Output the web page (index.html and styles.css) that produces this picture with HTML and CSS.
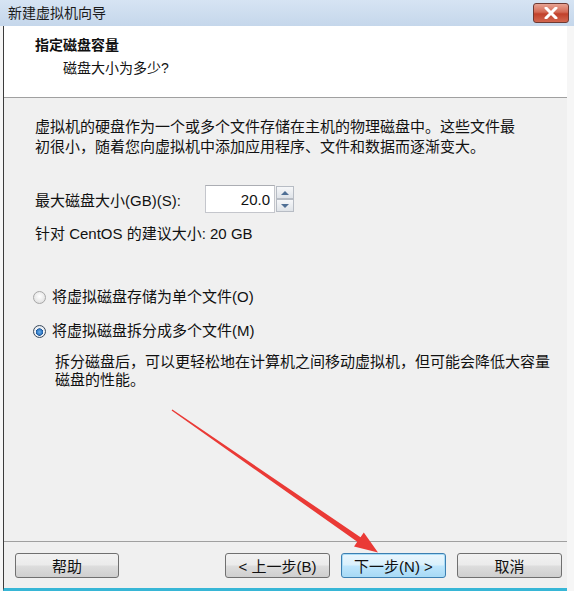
FILE: index.html
```html
<!DOCTYPE html>
<html lang="zh-CN">
<head>
  <meta charset="UTF-8">
  <meta name="viewport" content="width=device-width, initial-scale=1.0">
  <title>新建虚拟机向导</title>
  <link rel="stylesheet" href="styles.css">
</head>
<body>
  <div class="window">
    <div class="titlebar">
      <span class="title">新建虚拟机向导</span>
      <button class="close" type="button" aria-label="关闭">
        <svg width="14" height="12" viewBox="0 0 14 12">
          <path d="M2 1 L12 11 M12 1 L2 11" stroke="#fff" stroke-width="3" stroke-linecap="round"/>
        </svg>
      </button>
    </div>

    <div class="frame">
      <div class="header">
        <h1>指定磁盘容量</h1>
        <p>磁盘大小为多少?</p>
      </div>

      <div class="content">
        <p class="intro">虚拟机的硬盘作为一个或多个文件存储在主机的物理磁盘中。这些文件最<br>初很小，随着您向虚拟机中添加应用程序、文件和数据而逐渐变大。</p>

        <div class="size-row">
          <label for="size">最大磁盘大小(GB)(S):</label>
          <div class="spin">
            <input type="text" id="size" value="20.0">
            <div class="spin-btns">
              <span class="spin-btn"><i class="up"></i></span>
              <span class="spin-btn"><i class="down"></i></span>
            </div>
          </div>
        </div>

        <p class="hint">针对 CentOS 的建议大小: 20 GB</p>

        <div class="options">
          <label class="radio"><span class="dot"></span>将虚拟磁盘存储为单个文件(O)</label>
          <label class="radio checked"><span class="dot"></span>将虚拟磁盘拆分成多个文件(M)</label>
          <p class="desc">拆分磁盘后，可以更轻松地在计算机之间移动虚拟机，但可能会降低大容量<br>磁盘的性能。</p>
        </div>
      </div>

      <div class="footer">
        <button class="btn help" type="button">帮助</button>
        <button class="btn" type="button">&lt; 上一步(B)</button>
        <button class="btn focus" type="button">下一步(N) &gt;</button>
        <button class="btn" type="button">取消</button>
      </div>
    </div>

    <svg class="arrow" width="574" height="591" viewBox="0 0 574 591">
      <polygon points="171.6,410.5 172.4,409.5 360.5,537.2 363.8,532.6 378,552.5 354,546.4 357.3,541.8" fill="#ea3a36"/>
    </svg>
  </div>
</body>
</html>
```

FILE: styles.css
```css
body {
  margin: 0;
  background: #f6f6f6;
  font-family: "Liberation Sans", "Noto Sans CJK SC", sans-serif;
  font-size: 15px;
  color: #111;
}

.window {
  position: relative;
  width: 574px;
  height: 591px;
  display: flex;
  flex-direction: column;
  overflow: hidden;
}

/* title bar */
.titlebar {
  height: 26px;
  flex: none;
  display: flex;
  align-items: flex-start;
  padding: 0 5px 0 8px;
  background: linear-gradient(#d6e4f3, #c5d7eb);
}

.title {
  font-size: 14px;
  line-height: 26px;
  color: #1a1a1a;
}

.close {
  margin: 3px 0 0 auto;
  width: 36px;
  height: 20px;
  padding: 0;
  border: 1px solid #6e3a33;
  border-radius: 3px;
  background: linear-gradient(#e7a393 0%, #d46a55 45%, #c1412b 55%, #d2674f 100%);
  display: flex;
  align-items: center;
  justify-content: center;
}

/* window body */
.frame {
  flex: 1;
  display: flex;
  flex-direction: column;
  margin: 0 7px 0 3px;
  border-left: 1px solid #3c3c3c;
  border-bottom: 3px solid #37b6d6;
  background: #f0f0f0;
}

.header {
  height: 72px;
  box-sizing: border-box;
  padding: 9px 0 0 31px;
  background: #fff;
  border-bottom: 1px solid #a0a0a0;
}

.header h1 {
  margin: 0 0 3px;
  font-size: 14px;
  line-height: 20px;
  font-weight: bold;
}

.header p {
  margin: 0;
  padding-left: 28px;
  font-size: 14px;
  line-height: 20px;
}

.content {
  flex: 1;
  padding: 19px 0 0 31px;
}

.intro {
  margin: 0;
  line-height: 20px;
}

.size-row {
  display: flex;
  align-items: center;
  margin-top: 28px;
}

.size-row label {
  width: 170px;
}

.spin {
  display: flex;
  align-items: center;
}

.spin input {
  width: 70px;
  height: 28px;
  box-sizing: border-box;
  border: 1px solid #c4c6cc;
  border-top-color: #abadb3;
  padding: 0 4px 0 0;
  text-align: right;
  font: inherit;
  color: #111;
  background: #fff;
}

.spin-btns {
  display: flex;
  flex-direction: column;
  margin-left: 1px;
}

.spin-btn {
  width: 18px;
  height: 13px;
  box-sizing: border-box;
  border: 1px solid #b7bcc4;
  background: linear-gradient(#f6f7f9, #dfe3e8);
  display: flex;
  align-items: center;
  justify-content: center;
}

.spin-btn i {
  width: 0;
  height: 0;
  border-left: 4px solid transparent;
  border-right: 4px solid transparent;
}

.spin-btn .up {
  border-bottom: 4px solid #4f6f95;
}

.spin-btn .down {
  border-top: 4px solid #4f6f95;
}

.hint {
  margin: 11px 0 0;
  line-height: 20px;
}

.options {
  margin-top: 43px;
  margin-left: -2px;
}

.radio {
  display: flex;
  align-items: center;
  gap: 6px;
  line-height: 20px;
}

.radio + .radio {
  margin-top: 14px;
}

.dot {
  flex: none;
  width: 13px;
  height: 13px;
  box-sizing: border-box;
  border-radius: 50%;
  border: 1px solid #a7a7a7;
  background: radial-gradient(circle at 50% 40%, #ffffff 0%, #e4e4e4 70%, #cfcfcf 100%);
}

.checked .dot {
  border-color: #3a4a5c;
  background: radial-gradient(circle at 50% 55%, #6fb3ec 0%, #2b73c0 35%, #1b4f8c 42%, #f1f4f8 48%, #d6dbe2 100%);
}

.desc {
  margin: 12px 0 0;
  padding-left: 22px;
  line-height: 18px;
}

/* footer */
.footer {
  display: flex;
  gap: 11px;
  padding: 11px 5px 10px 11px;
  border-top: 1px solid #a0a0a0;
}

.btn {
  width: 105px;
  height: 25px;
  padding: 0;
  border: 1px solid #707070;
  border-radius: 3px;
  background: linear-gradient(#f2f2f2 0%, #ebebeb 48%, #dddddd 52%, #cfcfcf 100%);
  font: inherit;
  font-size: 15px;
  color: #111;
}

.btn.help {
  width: 104px;
  margin-right: auto;
}

.btn.focus {
  border-color: #3c7fb1;
  background: linear-gradient(#eaf6fd 0%, #d9f0fc 48%, #bee6fd 52%, #a7d9f5 100%);
  box-shadow: inset 0 0 0 1px #a9dcf7;
}

.arrow {
  position: absolute;
  left: 0;
  top: 0;
  pointer-events: none;
}
```
